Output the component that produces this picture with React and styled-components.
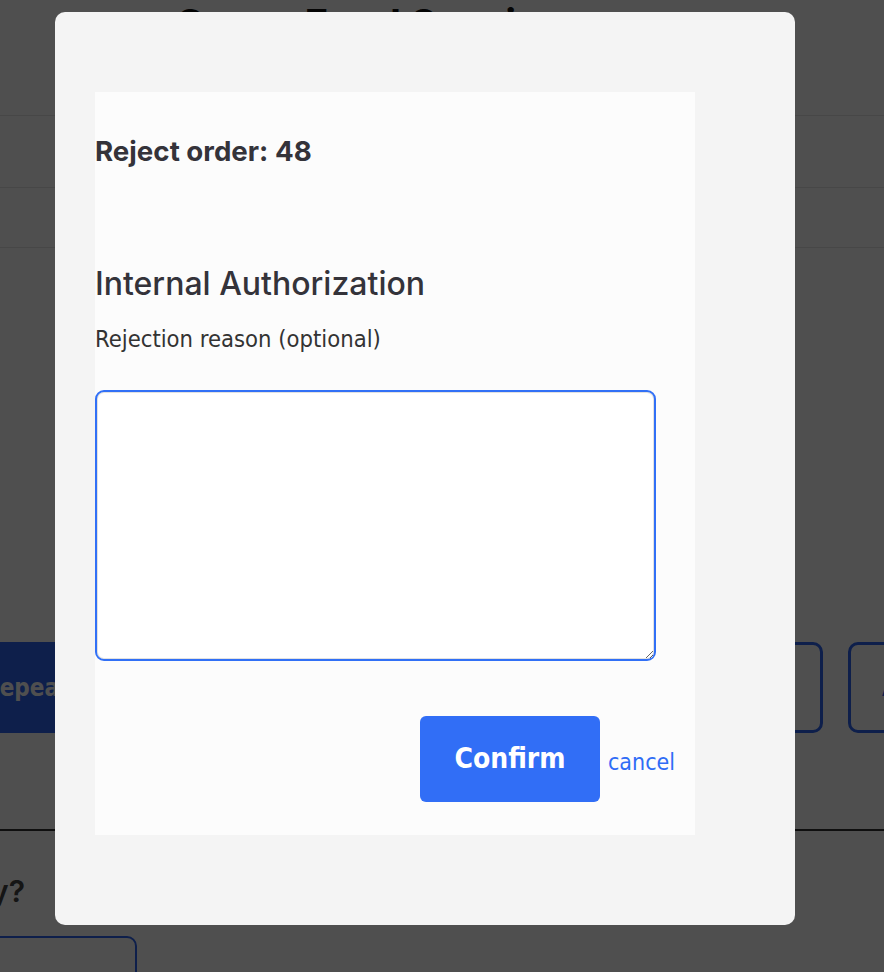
import React from "react";
import styled, { createGlobalStyle } from "styled-components";

const GlobalStyle = createGlobalStyle`
  html, body {
    margin: 0;
    padding: 0;
    background: #ffffff;
    overflow: hidden;
  }
  body {
    font-family: Inter, "Noto Sans", sans-serif;
    color: #222;
  }
  * { box-sizing: border-box; }
`;

const legacy = `"DejaVu Sans Condensed", "DejaVu Sans", "Liberation Sans", sans-serif`;

/* ---------- background page ---------- */
const Page = styled.div`
  width: 1180px;
  margin-left: -140px;
  padding-top: 0;
  height: 972px;
  overflow: hidden;
`;

const PageTitle = styled.h1`
  margin: 0 0 0 315px;
  font: 700 40px/48px Inter, sans-serif;
  color: #111;
`;

const Table = styled.div`
  margin-top: 67px;
  border-bottom: 1px solid #e4e4e4;
`;

const TableRow = styled.div`
  height: ${(p) => p.$h}px;
  border-top: 1px solid #e4e4e4;
`;

const ActionRow = styled.div`
  display: flex;
  gap: 25px;
  padding-left: 30px;
  margin-top: 394px;
`;

const ActionButton = styled.div`
  flex: none;
  width: ${(p) => p.$w}px;
  height: 91px;
  display: flex;
  align-items: center;
  padding-left: ${(p) => p.$pl || 32}px;
  white-space: nowrap;
  overflow: hidden;
  border-radius: 10px;
  font: 700 24px/1 ${legacy};
  background: ${(p) => (p.$primary ? "#2d64f0" : "#ffffff")};
  color: ${(p) => (p.$primary ? "#ffffff" : "#2d64f0")};
  border: 3px solid #2d64f0;
`;

const Divider = styled.hr`
  margin: 96px 0 0;
  border: 0;
  border-top: 2px solid #333;
`;

const Question = styled.div`
  display: grid;
  grid-template-columns: 165px 1fr;
  margin-top: 42px;
`;

const QuestionText = styled.h2`
  margin: 0;
  justify-self: end;
  white-space: nowrap;
  font: 600 30px/36px Inter, sans-serif;
  color: #444;
`;

const OptionButton = styled.div`
  margin: 27px 0 0 37px;
  width: 240px;
  height: 70px;
  border: 2px solid #2d64f0;
  border-radius: 10px;
`;

/* ---------- modal ---------- */
const Overlay = styled.div`
  position: fixed;
  inset: 0;
  background: rgba(0, 0, 0, 0.69);
  display: flex;
  align-items: flex-start;
  padding: 12px 0 0 55px;
`;

const Modal = styled.div`
  width: 740px;
  height: 913px;
  background: #f4f4f4;
  border-radius: 10px;
  padding: 80px 0 0 40px;
`;

const Panel = styled.div`
  width: 600px;
  height: 743px;
  background: #fcfcfc;
  padding: 0 20px 0 0;
  display: flex;
  flex-direction: column;
`;

const RejectTitle = styled.h3`
  margin: 44px 0 0;
  font: 700 27.7px/30px Inter, sans-serif;
  color: #34333a;
`;

const SectionTitle = styled.h2`
  margin: 100px 0 0;
  font: 500 32px/36px Inter, sans-serif;
  color: #34333a;
`;

const Label = styled.label`
  margin-top: 23px;
  font: 400 23.6px/28px ${legacy};
  color: #333;
`;

const TextArea = styled.textarea`
  margin-top: 37px;
  width: 561px;
  height: 271px;
  border: 2px solid #3170f6;
  border-radius: 9px;
  box-shadow: inset 0 0 0 1px #e1e1e1;
  background: #ffffff;
  outline: none;
  resize: both;
  padding: 8px;
  font: 400 18px ${legacy};
`;

const Footer = styled.div`
  margin-top: 55px;
  display: flex;
  justify-content: flex-end;
  align-items: center;
  gap: 8px;
`;

const ConfirmButton = styled.button`
  width: 180px;
  height: 86px;
  border: 0;
  border-radius: 6px;
  background: #316ef6;
  color: #ffffff;
  font: 700 28px/1 ${legacy};
  cursor: pointer;
  padding: 0;
`;

const CancelLink = styled.a`
  font: 400 23px/1 ${legacy};
  color: #2f6cf6;
  text-decoration: none;
  cursor: pointer;
  margin-top: 6px;
`;

export default function App() {
  return (
    <>
      <GlobalStyle />
      <Page>
        <PageTitle>Group Food Session</PageTitle>
        <Table>
          <TableRow $h={72} />
          <TableRow $h={60} />
        </Table>
        <ActionRow>
          <ActionButton $primary $w={300} $pl={90}>Repeat order</ActionButton>
          <ActionButton $w={300}>Edit order</ActionButton>
          <ActionButton $w={283}>Share</ActionButton>
          <ActionButton $w={300} $pl={31}>Archive</ActionButton>
        </ActionRow>
        <Divider />
        <Question>
          <QuestionText>Repeat weekly?</QuestionText>
        </Question>
        <OptionButton />
      </Page>
      <Overlay>
        <Modal role="dialog" aria-modal="true">
          <Panel>
            <RejectTitle>Reject order: 48</RejectTitle>
            <SectionTitle>Internal Authorization</SectionTitle>
            <Label htmlFor="reason">Rejection reason (optional)</Label>
            <TextArea id="reason" />
            <Footer>
              <ConfirmButton>Confirm</ConfirmButton>
              <CancelLink>cancel</CancelLink>
            </Footer>
          </Panel>
        </Modal>
      </Overlay>
    </>
  );
}
